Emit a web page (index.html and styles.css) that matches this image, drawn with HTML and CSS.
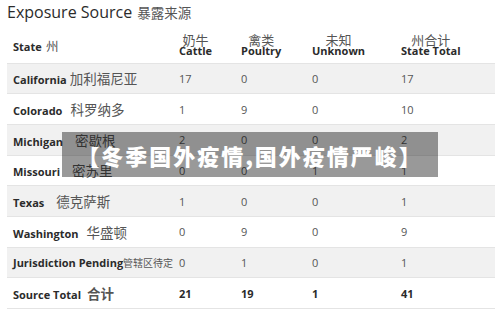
FILE: index.html
```html
<!DOCTYPE html>
<html lang="zh">
<head>
<meta charset="utf-8">
<title>Exposure Source</title>
<link rel="stylesheet" href="styles.css">
</head>
<body>
<div class="page">
  <h1 class="title">Exposure Source <span class="zh">暴露来源</span></h1>
  <table class="data">
    <thead>
      <tr>
        <th class="c1"><span class="en">State</span> <span class="zh">州</span></th>
        <th class="c2"><span class="hd"><span class="zh">奶牛</span><span class="en">Cattle</span></span></th>
        <th class="c3"><span class="hd"><span class="zh">禽类</span><span class="en">Poultry</span></span></th>
        <th class="c4"><span class="hd"><span class="zh">未知</span><span class="en">Unknown</span></span></th>
        <th class="c5"><span class="hd"><span class="zh">州合计</span><span class="en">State Total</span></span></th>
      </tr>
    </thead>
    <tbody>
      <tr><td><span class="en">California</span><span class="zh g3">加利福尼亚</span></td><td>17</td><td>0</td><td>0</td><td>17</td></tr>
      <tr><td><span class="en">Colorado</span><span class="zh g8">科罗纳多</span></td><td>1</td><td>9</td><td>0</td><td>10</td></tr>
      <tr><td><span class="en">Michigan</span><span class="zh g12">密歇根</span></td><td>2</td><td>0</td><td>0</td><td>2</td></tr>
      <tr><td><span class="en">Missouri</span><span class="zh g12">密苏里</span></td><td>0</td><td>0</td><td>1</td><td>1</td></tr>
      <tr><td><span class="en">Texas</span><span class="zh g12">德克萨斯</span></td><td>1</td><td>0</td><td>0</td><td>1</td></tr>
      <tr><td><span class="en">Washington</span><span class="zh g8">华盛顿</span></td><td>0</td><td>9</td><td>0</td><td>9</td></tr>
      <tr><td><span class="en">Jurisdiction Pending</span><span class="zh small">管辖区待定</span></td><td>0</td><td>1</td><td>0</td><td>1</td></tr>
      <tr class="total"><td><span class="en">Source Total</span><span class="zh g6">合计</span></td><td>21</td><td>19</td><td>1</td><td>41</td></tr>
    </tbody>
  </table>
  <div class="banner">【冬季国外疫情,国外疫情严峻】</div>
</div>
</body>
</html>
```

FILE: styles.css
```css
html, body {
  margin: 0;
  padding: 0;
  background: #ffffff;
}
.page {
  position: relative;
  width: 500px;
  height: 310px;
  padding: 0 5px 0 7px;
  box-sizing: border-box;
  font-family: "Open Sans", "Noto Sans CJK SC", sans-serif;
  color: #333;
}
.title {
  margin: 0;
  padding-top: 2px;
  height: 24px;
  box-sizing: border-box;
  font-size: 16px;
  line-height: 20px;
  font-weight: 500;
  color: #2b2b2b;
}
.title .zh {
  font-family: "Noto Sans CJK SC", sans-serif;
  font-size: 13.5px;
  font-weight: 400;
  color: #555;
  margin-left: 1px;
}
.data {
  width: 488px;
  border-collapse: collapse;
  table-layout: fixed;
}
.data th {
  text-align: left;
  vertical-align: bottom;
  height: 39px;
  padding: 0 0 7px 6px;
  box-sizing: border-box;
  font-weight: 700;
}
.data th.c1 { width: 166px; }
.data th.c2 { width: 62px; }
.data th.c3 { width: 71px; }
.data th.c4 { width: 89px; }
.data th.c5 { width: 100px; }
.data th .en {
  font-size: 11px;
  line-height: 11px;
  color: #2b2b2b;
}
.data th .zh {
  font-family: "Noto Sans CJK SC", sans-serif;
  font-size: 13px;
  font-weight: 400;
  color: #555;
}
.data th.c1 .zh { font-size: 12.5px; }
.hd {
  display: inline-flex;
  flex-direction: column;
  align-items: center;
}
.hd .zh { line-height: 11px; }
.hd .en { line-height: 11px; }
.data td {
  height: 29.7px;
  padding: 0 0 0 6px;
  border-top: 1px solid #e4e4e4;
  font-size: 11px;
  color: #555;
  vertical-align: middle;
  white-space: nowrap;
}
.data tbody tr:nth-child(odd) td { background: #f1f1f1; }
.data tbody tr:last-child td { border-bottom: 1px solid #e4e4e4; }
.data td .en {
  font-weight: 700;
  color: #2b2b2b;
}
.data td .zh {
  font-family: "Noto Sans CJK SC", sans-serif;
  font-size: 13.5px;
  color: #555;
}
.g3 { margin-left: 3px; }
.g6 { margin-left: 6px; }
.g8 { margin-left: 8px; }
.g12 { margin-left: 12px; }
.data td .zh.small {
  font-size: 10px;
  margin-left: 0;
}
.total td {
  font-weight: 700;
  color: #2b2b2b;
}
.banner {
  position: absolute;
  left: 62px;
  top: 132px;
  width: 376px;
  height: 45px;
  background: rgba(0, 0, 0, 0.4);
  color: #fff;
  font-family: "Noto Sans CJK SC", sans-serif;
  font-weight: 900;
  font-size: 22px;
  letter-spacing: 2px;
  display: flex;
  align-items: center;
  justify-content: center;
  white-space: nowrap;
}
```
